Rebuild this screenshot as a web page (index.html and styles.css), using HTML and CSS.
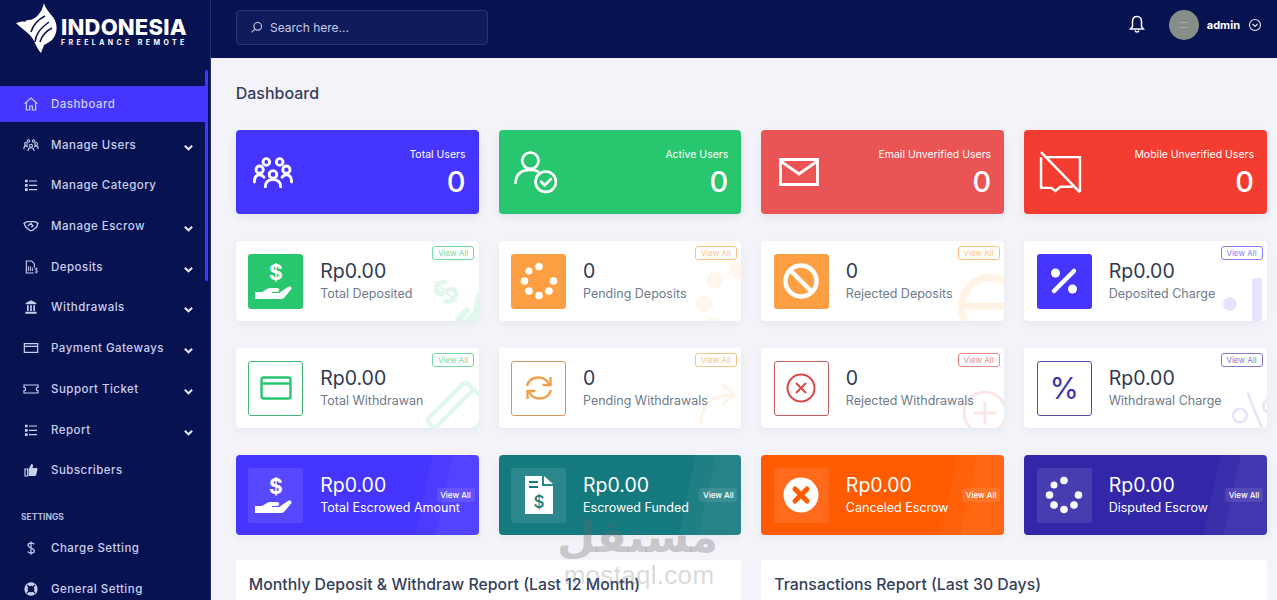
FILE: index.html
```html
<!DOCTYPE html>
<html lang="en">
<head>
  <meta charset="UTF-8" />
  <meta name="viewport" content="width=device-width, initial-scale=1.0"/>
  <title>Dashboard</title>
  <link rel="stylesheet" href="styles.css">
</head>
<body>

  <!-- Icon set -->
  <svg class="defs" xmlns="http://www.w3.org/2000/svg">
    <symbol id="i-home" viewBox="0 0 24 24"><path d="M2.500 11.500 12 3l9.500 8.500M5 9.500V21h5v-6h4v6h5V9.500" fill="none" stroke="currentColor" stroke-width="1.800"/></symbol>
    <symbol id="i-users" viewBox="0 0 44 32"><g fill="none" stroke="currentColor" stroke-width="3" stroke-linecap="round"><circle cx="15" cy="5" r="3.500"/><circle cx="29" cy="5" r="3.500"/><circle cx="8" cy="13" r="3.800"/><circle cx="36" cy="13" r="3.800"/><circle cx="22" cy="18" r="4"/><path d="M2.500 26c0-5 2-7.500 5.500-7.500 2 0 3.500.8 4.500 2.500M41.500 26c0-5-2-7.500-5.500-7.500-2 0-3.500.8-4.500 2.500M14 31c0-5 3-7.500 8-7.500s8 2.500 8 7.500"/></g></symbol>
    <symbol id="i-list" viewBox="0 0 24 24"><path d="M3 4h4v4H3zM3 10.500h4v4H3zM3 17h4v4H3z" fill="currentColor"/><path d="M9 6h12M9 12.500h12M9 19h12" stroke="currentColor" stroke-width="1.800"/></symbol>
    <symbol id="i-shake" viewBox="0 0 24 24"><path d="M1.500 8 6 5.500h12L22.500 8l-2 5.500-7 5.500h-2.500l-7-5.500zM7 12l5-4 3 4-3 1.500" fill="none" stroke="currentColor" stroke-width="1.900"/></symbol>
    <symbol id="i-file" viewBox="0 0 24 24"><path d="M16 21H5V3h8l4 4v6" fill="none" stroke="currentColor" stroke-width="1.700"/><path d="M8 11v7M11 11v7M14 13v5" stroke="currentColor" stroke-width="1.500"/><path d="M22 14.500c-2.500-1-4-.5-4 1s4 1.500 4 3.200-2 1.800-4.200.8M20 13v9" fill="none" stroke="currentColor" stroke-width="1.200"/></symbol>
    <symbol id="i-bank" viewBox="0 0 24 24"><path d="M12 2 20 6v2H4V6zM3.500 19h17v3h-17zM6 9.500h2.500V18H6zM10.800 9.500h2.500V18h-2.500zM15.500 9.500H18V18h-2.500z" fill="currentColor"/></symbol>
    <symbol id="i-card" viewBox="0 0 24 24"><path d="M2 5.500h20v13H2zM2 9.500h20" fill="none" stroke="currentColor" stroke-width="1.800"/></symbol>
    <symbol id="i-ticket" viewBox="0 0 24 24"><path d="M1.500 6h21v3.500a2.500 2.500 0 0 0 0 5V18h-21v-3.500a2.500 2.500 0 0 0 0-5z" fill="none" stroke="currentColor" stroke-width="1.800"/></symbol>
    <symbol id="i-thumb" viewBox="0 0 24 24"><path d="M3 10.500h4V21H3z" fill="none" stroke="currentColor" stroke-width="1.800"/><path d="M8.500 10.500 12.500 3c2 0 3 1.300 2.500 3l-.8 3H20c1.300 0 2 1 1.700 2.300l-1.800 8c-.2 1-1 1.700-2 1.700H8.500z" fill="currentColor"/></symbol>
    <symbol id="i-cog" viewBox="0 0 24 24"><circle cx="12" cy="12" r="7.500" fill="none" stroke="currentColor" stroke-width="5"/><path d="M6 6l3 3M18 6l-3 3M6 18l3-3M18 18l-3-3" stroke="#071251" stroke-width="1.600"/></symbol>
    <symbol id="i-dollar" viewBox="0 0 24 24"><path d="M17 6.500C15.500 4.500 7.500 3.500 7.500 8c0 4.500 9.500 3.500 9.500 8.500 0 4.500-8 3.500-10 1M12 2v20" fill="none" stroke="currentColor" stroke-width="1.800"/></symbol>
    <symbol id="i-chev" viewBox="0 0 12 12"><path d="M2 4 6 8l4-4" fill="none" stroke="currentColor" stroke-width="2.200"/></symbol>
    <symbol id="i-search" viewBox="0 0 16 16"><circle cx="9.500" cy="6.500" r="4.700" fill="none" stroke="currentColor" stroke-width="1.400"/><path d="M6 10l-4 4" stroke="currentColor" stroke-width="1.400"/></symbol>
    <symbol id="i-bell" viewBox="0 0 16 18"><path d="M8 1.500c-3 0-4.500 2.200-4.500 5v5L1.500 14h13l-2-2.500v-5c0-2.800-1.500-5-4.500-5z" fill="none" stroke="currentColor" stroke-width="1.500"/><path d="M6 15.500c.3 1 1 1.500 2 1.500s1.700-.5 2-1.500" fill="none" stroke="currentColor" stroke-width="1.500"/></symbol>
    <symbol id="i-chev-o" viewBox="0 0 14 14"><circle cx="7" cy="7" r="5.500" fill="none" stroke="currentColor" stroke-width="1.100"/><path d="M4.500 6 7 8.500 9.500 6" fill="none" stroke="currentColor" stroke-width="1.200"/></symbol>
    <symbol id="i-user-check" viewBox="0 0 42 42"><g fill="none" stroke="currentColor" stroke-width="2.600" stroke-linecap="round"><circle cx="16" cy="9.500" r="8"/><path d="M1.500 31c.5-8 5-12.500 14.500-12.500 3 0 5.500.5 7.500 1.500"/><circle cx="31" cy="30" r="10"/><path d="M26.500 30l3.500 3.500 6-6"/></g></symbol>
    <symbol id="i-mail" viewBox="0 0 40 28"><path d="M1.500 1.500h37v25h-37zM1.500 3 20 16 38.500 3" fill="none" stroke="currentColor" stroke-width="2.800"/></symbol>
    <symbol id="i-chat-off" viewBox="0 0 42 42"><path d="M6 6h34v34M33 35H21l-5 4-4-3H2V6" fill="none" stroke="currentColor" stroke-width="2.400"/><path d="M2 1l38 39.500" stroke="currentColor" stroke-width="2.400"/></symbol>
    <symbol id="i-hand" viewBox="0 0 41 36"><path d="M0 29h7l5-3c1-.7 2-1 3-1h7c1.400 0 2.300.8 2.300 1.900 0 1.200-.9 2-2.300 2h-5v1.200h7l9-6c1.200-.8 2.600-.6 3.300.4.600 1 .2 1.900-.7 2.600L29 35c-1 .7-1.800 1-3 1H0z" fill="currentColor"/><text class="hand-sign" x="21" y="17" text-anchor="middle" fill="currentColor">$</text></symbol>
    <symbol id="i-dots" viewBox="0 0 44 44" fill="currentColor"><circle cx="22" cy="7.500" r="3.800"/><circle cx="12" cy="12" r="3.500"/><circle cx="7.500" cy="22" r="3.800"/><circle cx="12" cy="32" r="3.800"/><circle cx="22" cy="36.500" r="3.800"/><circle cx="32" cy="32" r="3.800"/><circle cx="36.500" cy="22" r="3.800"/></symbol>
    <symbol id="i-ban" viewBox="0 0 36 36"><circle cx="18" cy="18" r="15.500" fill="none" stroke="currentColor" stroke-width="4.500"/><path d="M7.500 7.500l21 21" stroke="currentColor" stroke-width="4.500"/></symbol>
    <symbol id="i-percent" viewBox="0 0 30 30"><circle cx="6.500" cy="7" r="4.500" fill="currentColor"/><circle cx="23.500" cy="23" r="4.500" fill="currentColor"/><path d="M25 5 5 25" stroke="currentColor" stroke-width="4.500" stroke-linecap="round"/></symbol>
    <symbol id="i-card-big" viewBox="0 0 32 24"><rect x="1.500" y="1.500" width="29" height="21" rx="2" fill="none" stroke="currentColor" stroke-width="2.400"/><path d="M1.500 7.500h29" stroke="currentColor" stroke-width="2.400"/></symbol>
    <symbol id="i-sync" viewBox="0 0 28 28"><g fill="none" stroke="currentColor" stroke-width="2.400"><path d="M2 12C3.500 6.500 8 3.500 13.500 3.500c4.500 0 8 2 10.500 6.500"/><path d="M26 16c-1.500 5.500-6 8.500-11.500 8.500-4.500 0-8-2-10.500-6.500"/><path d="M25.500 3v8h-8M2.500 25v-8h8"/></g></symbol>
    <symbol id="i-x-circle" viewBox="0 0 30 30"><circle cx="15" cy="15" r="13.500" fill="none" stroke="currentColor" stroke-width="2"/><path d="M10 10l10 10M20 10 10 20" stroke="currentColor" stroke-width="2"/></symbol>
    <symbol id="i-x-fill" viewBox="0 0 36 36"><circle cx="18" cy="18" r="17.500" fill="currentColor"/><path d="M12 12l12 12M24 12 12 24" stroke="#ff5b00" stroke-width="5" stroke-linecap="round"/></symbol>
    <symbol id="i-invoice" viewBox="0 0 28 38"><path d="M0 0h17v10h11v28H0z" fill="currentColor"/><path d="M19 0l9 8h-9z" fill="currentColor"/><path d="M4 6h9M4 11h9" stroke="#157a7f" stroke-width="2"/><text class="invoice-sign" x="14" y="32" text-anchor="middle" fill="#157a7f">$</text></symbol>
    <symbol id="i-plus-ring" viewBox="0 0 44 44"><circle cx="22" cy="22" r="20" fill="none" stroke="currentColor" stroke-width="3"/><path d="M22 11v22M11 22h22" stroke="currentColor" stroke-width="3"/></symbol>
    <symbol id="i-minus-ring" viewBox="0 0 44 44"><circle cx="22" cy="22" r="19" fill="none" stroke="currentColor" stroke-width="5"/><path d="M3 22h38" stroke="currentColor" stroke-width="5"/></symbol>
    <symbol id="i-arrow" viewBox="0 0 44 44"><path d="M4 42C4 22 14 12 38 12M26 2l12 10-12 10" fill="none" stroke="currentColor" stroke-width="3"/></symbol>
    <symbol id="i-bars" viewBox="0 0 44 44"><circle cx="11" cy="27" r="7" fill="currentColor"/><rect x="33" y="1" width="10" height="43" rx="2" fill="currentColor"/></symbol>
    <symbol id="i-slash-pct" viewBox="0 0 44 44"><circle cx="8" cy="24" r="6.500" fill="none" stroke="currentColor" stroke-width="2.500"/><circle cx="38" cy="20" r="6.500" fill="none" stroke="currentColor" stroke-width="2.500"/><path d="M19 4l8 38" stroke="currentColor" stroke-width="2.500"/></symbol>
  </svg>

  <div class="layout">

    <!-- Sidebar -->
    <aside class="sidebar">
      <div class="logo">
        <svg class="logo-mark" viewBox="0 0 42 50"><path d="M28 0c1 5 5 9 9 14 5 7 5 16-1 23-2 2-5 3-8 5l-3 8c-3-3-5-8-7-12C15 31 7 27 0 20c4-1 7-2 9-1 1-2 3-2 4-2C19 17 26 10 28 0z" fill="#fff"/><path d="M19 39c1-9 6-14 14-20M24 39c2-7 6-11 12-14M15 29c2-7 6-12 14-16" fill="none" stroke="#071251" stroke-width="1.500"/></svg>
        <div class="logo-text">
          <div class="logo-title">INDONESIA</div>
          <div class="logo-sub">FREELANCE REMOTE</div>
        </div>
      </div>
      <div class="scroll-thumb"></div>
      <ul class="menu">
        <li class="menu-item active"><svg class="menu-icon"><use href="#i-home"/></svg>Dashboard</li>
        <li class="menu-item"><svg class="menu-icon"><use href="#i-users"/></svg>Manage Users<svg class="menu-chev"><use href="#i-chev"/></svg></li>
        <li class="menu-item"><svg class="menu-icon"><use href="#i-list"/></svg>Manage Category</li>
        <li class="menu-item"><svg class="menu-icon"><use href="#i-shake"/></svg>Manage Escrow<svg class="menu-chev"><use href="#i-chev"/></svg></li>
        <li class="menu-item"><svg class="menu-icon"><use href="#i-file"/></svg>Deposits<svg class="menu-chev"><use href="#i-chev"/></svg></li>
        <li class="menu-item"><svg class="menu-icon"><use href="#i-bank"/></svg>Withdrawals<svg class="menu-chev"><use href="#i-chev"/></svg></li>
        <li class="menu-item"><svg class="menu-icon"><use href="#i-card"/></svg>Payment Gateways<svg class="menu-chev"><use href="#i-chev"/></svg></li>
        <li class="menu-item"><svg class="menu-icon"><use href="#i-ticket"/></svg>Support Ticket<svg class="menu-chev"><use href="#i-chev"/></svg></li>
        <li class="menu-item"><svg class="menu-icon"><use href="#i-list"/></svg>Report<svg class="menu-chev"><use href="#i-chev"/></svg></li>
        <li class="menu-item"><svg class="menu-icon"><use href="#i-thumb"/></svg>Subscribers</li>
        <li class="menu-title">SETTINGS</li>
        <li class="menu-item"><svg class="menu-icon"><use href="#i-dollar"/></svg>Charge Setting</li>
        <li class="menu-item"><svg class="menu-icon"><use href="#i-cog"/></svg>General Setting</li>
      </ul>
    </aside>

    <div class="main">

      <!-- Top Navbar -->
      <div class="navbar">
        <div class="search">
          <svg class="search-icon"><use href="#i-search"/></svg>
          <span>Search here...</span>
        </div>
        <div class="user-info">
          <svg class="bell"><use href="#i-bell"/></svg>
          <div class="avatar"><span class="avatar-mark"></span></div>
          <span class="user-name">admin</span>
          <svg class="user-chev"><use href="#i-chev-o"/></svg>
        </div>
      </div>

      <div class="content">
        <h2 class="page-title">Dashboard</h2>

        <div class="cards">

          <!-- Stat cards -->
          <div class="stat bg-blue">
            <svg class="stat-icon icon-users"><use href="#i-users"/></svg>
            <div class="stat-text"><div class="stat-label">Total Users</div><div class="stat-num">0</div></div>
          </div>
          <div class="stat bg-green">
            <svg class="stat-icon icon-check"><use href="#i-user-check"/></svg>
            <div class="stat-text"><div class="stat-label">Active Users</div><div class="stat-num">0</div></div>
          </div>
          <div class="stat bg-rose">
            <svg class="stat-icon icon-mail"><use href="#i-mail"/></svg>
            <div class="stat-text"><div class="stat-label">Email Unverified Users</div><div class="stat-num">0</div></div>
          </div>
          <div class="stat bg-red">
            <svg class="stat-icon icon-check"><use href="#i-chat-off"/></svg>
            <div class="stat-text"><div class="stat-label">Mobile Unverified Users</div><div class="stat-num">0</div></div>
          </div>

          <!-- Solid icon widgets -->
          <div class="widget c-green">
            <div class="widget-icon fill"><svg class="sym-hand"><use href="#i-hand"/></svg></div>
            <div class="widget-text"><div class="widget-value">Rp0.00</div><div class="widget-label">Total Deposited</div></div>
            <a class="view-all">View All</a>
            <svg class="ghost ghost-hand"><use href="#i-hand"/></svg>
          </div>
          <div class="widget c-orange">
            <div class="widget-icon fill"><svg class="sym-dots"><use href="#i-dots"/></svg></div>
            <div class="widget-text"><div class="widget-value">0</div><div class="widget-label">Pending Deposits</div></div>
            <a class="view-all">View All</a>
            <svg class="ghost ghost-dots"><use href="#i-dots"/></svg>
          </div>
          <div class="widget c-orange">
            <div class="widget-icon fill"><svg class="sym-ban"><use href="#i-ban"/></svg></div>
            <div class="widget-text"><div class="widget-value">0</div><div class="widget-label">Rejected Deposits</div></div>
            <a class="view-all">View All</a>
            <svg class="ghost ghost-ring"><use href="#i-minus-ring"/></svg>
          </div>
          <div class="widget c-blue">
            <div class="widget-icon fill"><svg class="sym-percent"><use href="#i-percent"/></svg></div>
            <div class="widget-text"><div class="widget-value">Rp0.00</div><div class="widget-label">Deposited Charge</div></div>
            <a class="view-all">View All</a>
            <svg class="ghost ghost-bars"><use href="#i-bars"/></svg>
          </div>

          <!-- Outline icon widgets -->
          <div class="widget c-green">
            <div class="widget-icon line"><svg class="sym-card"><use href="#i-card-big"/></svg></div>
            <div class="widget-text"><div class="widget-value">Rp0.00</div><div class="widget-label">Total Withdrawan</div></div>
            <a class="view-all">View All</a>
            <svg class="ghost ghost-card"><use href="#i-card-big"/></svg>
          </div>
          <div class="widget c-amber">
            <div class="widget-icon line"><svg class="sym-sync"><use href="#i-sync"/></svg></div>
            <div class="widget-text"><div class="widget-value">0</div><div class="widget-label">Pending Withdrawals</div></div>
            <a class="view-all">View All</a>
            <svg class="ghost ghost-arrow"><use href="#i-arrow"/></svg>
          </div>
          <div class="widget c-rose">
            <div class="widget-icon line"><svg class="sym-x"><use href="#i-x-circle"/></svg></div>
            <div class="widget-text"><div class="widget-value">0</div><div class="widget-label">Rejected Withdrawals</div></div>
            <a class="view-all">View All</a>
            <svg class="ghost ghost-plus"><use href="#i-plus-ring"/></svg>
          </div>
          <div class="widget c-indigo">
            <div class="widget-icon line"><span class="sym-pct">%</span></div>
            <div class="widget-text"><div class="widget-value">Rp0.00</div><div class="widget-label">Withdrawal Charge</div></div>
            <a class="view-all">View All</a>
            <svg class="ghost ghost-pct"><use href="#i-slash-pct"/></svg>
          </div>

          <!-- Coloured widgets -->
          <div class="widget solid bg-blue">
            <div class="widget-icon soft"><svg class="sym-hand"><use href="#i-hand"/></svg></div>
            <div class="widget-text"><div class="widget-value">Rp0.00</div><div class="widget-label">Total Escrowed Amount</div></div>
            <a class="view-all">View All</a>
          </div>
          <div class="widget solid bg-teal">
            <div class="widget-icon soft"><svg class="sym-invoice"><use href="#i-invoice"/></svg></div>
            <div class="widget-text"><div class="widget-value">Rp0.00</div><div class="widget-label">Escrowed Funded</div></div>
            <a class="view-all">View All</a>
          </div>
          <div class="widget solid bg-flame">
            <div class="widget-icon soft"><svg class="sym-ban"><use href="#i-x-fill"/></svg></div>
            <div class="widget-text"><div class="widget-value">Rp0.00</div><div class="widget-label">Canceled Escrow</div></div>
            <a class="view-all">View All</a>
          </div>
          <div class="widget solid bg-indigo">
            <div class="widget-icon soft"><svg class="sym-dots"><use href="#i-dots"/></svg></div>
            <div class="widget-text"><div class="widget-value">Rp0.00</div><div class="widget-label">Disputed Escrow</div></div>
            <a class="view-all">View All</a>
          </div>
        </div>

        <!-- Reports -->
        <div class="reports">
          <div class="report"><h3>Monthly Deposit &amp; Withdraw Report (Last 12 Month)</h3></div>
          <div class="report"><h3>Transactions Report (Last 30 Days)</h3></div>
        </div>
      </div>
    </div>
  </div>

  <div class="watermark">
    <div class="wm-ar" lang="ar" dir="rtl">مستقل</div>
    <div class="wm-en">mostaql.com</div>
  </div>

</body>
</html>
```

FILE: styles.css
```css
* {
  box-sizing: border-box;
}
html, body {
  height: 100%;
}
body {
  margin: 0;
  padding: 0;
  font-family: "Inter", "Open Sans", sans-serif;
  background: #f3f3f9;
  overflow: hidden;
}
.defs {
  display: none;
}
.hand-sign {
  font: 700 21px "Inter", sans-serif;
}
.invoice-sign {
  font: 500 17px "Inter", sans-serif;
}
.layout {
  display: flex;
  height: 600px;
  overflow: hidden;
}

/* sidebar */
.sidebar {
  position: relative;
  width: 211px;
  flex-shrink: 0;
  background: #071251;
  border-right: 1px solid #26306a;
  color: #c9cfee;
}
.logo {
  height: 86px;
  padding: 3px 0 0 16px;
  display: flex;
  align-items: flex-start;
}
.logo-mark {
  width: 42px;
  height: 50px;
  flex-shrink: 0;
}
.logo-text {
  margin: 13px 0 0 3px;
  color: #fff;
}
.logo-title {
  font-size: 22px;
  line-height: 22px;
  font-weight: 800;
  letter-spacing: 0.200px;
}
.logo-sub {
  font-size: 7px;
  line-height: 9px;
  font-weight: 700;
  letter-spacing: 3.400px;
  white-space: nowrap;
}
.scroll-thumb {
  position: absolute;
  top: 70px;
  left: 205px;
  width: 3px;
  height: 211px;
  border-radius: 2px;
  background: #4634ff;
}
.menu {
  list-style: none;
  margin: 0;
  padding: 0;
}
.menu-item {
  display: flex;
  align-items: center;
  height: 36px;
  margin: 0 5px 4.700px 0;
  padding-left: 23px;
  font-size: 11.500px;
  font-weight: 500;
  letter-spacing: 0.480px;
  white-space: nowrap;
}
.menu-item.active {
  background: #4634ff;
}
.menu-icon {
  width: 16px;
  height: 16px;
  margin-right: 12px;
  flex-shrink: 0;
}
.menu-chev {
  width: 11px;
  height: 11px;
  margin: 5px 11px 0 auto;
  color: #e6e8f5;
}
.menu-title {
  height: 37px;
  padding: 19px 0 0 21px;
  font-size: 8.500px;
  line-height: 11px;
  font-weight: 700;
  color: #b3bbdf;
}

/* navbar */
.main {
  flex: 1;
  min-width: 0;
}
.navbar {
  height: 58px;
  background: #071251;
  padding: 0 15px 0 25px;
  display: flex;
  justify-content: space-between;
  align-items: flex-start;
}
.search {
  width: 252px;
  height: 35px;
  margin-top: 10px;
  padding-left: 13px;
  display: flex;
  align-items: center;
  gap: 7px;
  background: #101b5c;
  border: 1px solid #2a3573;
  border-radius: 4px;
  color: #c8cce2;
  font-size: 12px;
}
.search-icon {
  width: 13px;
  height: 13px;
}
.user-info {
  display: flex;
  align-items: center;
  height: 50px;
  color: #fff;
}
.bell {
  width: 16px;
  height: 18px;
  margin: -3px 24px 0 0;
}
.avatar {
  width: 30px;
  height: 30px;
  border-radius: 50%;
  background: #868e89;
  display: flex;
  align-items: center;
  justify-content: center;
}
.avatar-mark {
  width: 9px;
  height: 6px;
  border-top: 1px solid #a6ada8;
  border-bottom: 1px solid #a6ada8;
}
.user-name {
  margin: 0 8px;
  font-size: 11px;
  font-weight: 700;
}
.user-chev {
  width: 14px;
  height: 14px;
  color: #dfe2f2;
}

/* content */
.content {
  padding: 24px 10px 0 24.700px;
}
.page-title {
  margin: 0 0 26px;
  font-size: 16px;
  line-height: 22px;
  font-weight: 500;
  color: #34405a;
}
.cards {
  display: grid;
  grid-template-columns: repeat(4, 1fr);
  gap: 27px 20px;
}
.stat {
  height: 84px;
  padding: 0 13px 0 15px;
  display: flex;
  justify-content: space-between;
  align-items: center;
  color: #fff;
  border-radius: 4px;
  box-shadow: 0 3px 8px rgba(40,40,90,0.08);
}
.stat-text {
  text-align: right;
  margin-top: 2px;
}
.stat-label {
  font-size: 10.500px;
  line-height: 16px;
  margin-bottom: 2.500px;
}
.stat-num {
  font-size: 29px;
  line-height: 34px;
  font-weight: 500;
}
.stat-icon {
  flex-shrink: 0;
}
.icon-users {
  width: 42px;
  height: 31px;
  margin-left: 1px;
}
.icon-check {
  width: 43px;
  height: 43px;
}
.icon-mail {
  width: 40px;
  height: 28px;
  margin-left: 3px;
}

/* widgets */
.widget {
  position: relative;
  height: 80px;
  padding: 0 12.500px;
  display: flex;
  align-items: center;
  gap: 17px;
  background: #fff;
  border-radius: 4px;
  overflow: hidden;
  box-shadow: 0 3px 10px rgba(40,40,90,0.05);
  white-space: nowrap;
}
.bg-blue { background: #4634ff; }
.bg-green { background: #28c76f; }
.bg-rose { background: #ea5455; }
.bg-red { background: #f53c30; }
.bg-teal { background: #157a7f; }
.bg-flame { background: #ff5b00; }
.bg-indigo { background: #3227a8; }
.c-green { --tone: #28c76f; }
.c-orange { --tone: #ff9f43; }
.c-amber { --tone: #f0a04b; }
.c-rose { --tone: #d9484a; }
.c-blue { --tone: #4634ff; }
.c-indigo { --tone: #3f35b4; }
.widget-icon {
  width: 55px;
  height: 55px;
  flex-shrink: 0;
  border-radius: 3px;
  display: flex;
  align-items: center;
  justify-content: center;
}
.widget-icon.fill {
  background: var(--tone);
  color: #fff;
}
.widget-icon.line {
  border: 1px solid color-mix(in srgb, var(--tone) 70%, #8a8a8a);
  color: var(--tone);
}
.widget-icon.soft {
  background: rgba(255,255,255,0.1);
  color: #fff;
}
.widget-text {
  margin-top: -2px;
}
.widget-value {
  font-size: 19.500px;
  line-height: 26px;
  font-weight: 400;
  color: #2f3a4f;
}
.widget-label {
  margin-top: 1px;
  font-size: 12.500px;
  line-height: 18px;
  color: #6f7a8a;
}
.view-all {
  position: absolute;
  top: 5px;
  right: 4.500px;
  width: 42px;
  height: 14px;
  border: 1px solid var(--tone);
  border-radius: 3px;
  font-size: 8px;
  line-height: 12px;
  text-align: center;
  color: var(--tone);
  opacity: 0.65;
}
.sym-hand { width: 41px; height: 36px; }
.sym-dots { width: 44px; height: 44px; }
.sym-ban { width: 36px; height: 36px; }
.sym-percent { width: 30px; height: 30px; }
.sym-card { width: 32px; height: 24px; }
.sym-sync { width: 28px; height: 28px; }
.sym-x { width: 30px; height: 30px; }
.sym-invoice { width: 28px; height: 38px; }
.sym-pct {
  font-size: 30px;
  line-height: 1;
}

/* faded corner icons */
.ghost {
  position: absolute;
  color: var(--tone);
  opacity: 0.13;
}
.ghost-hand {
  width: 66px;
  height: 58px;
  right: -9px;
  bottom: -10px;
  transform: rotate(-45deg);
}
.ghost-dots {
  width: 100px;
  height: 100px;
  right: -46px;
  bottom: -32px;
  opacity: 0.09;
}
.ghost-ring {
  width: 66px;
  height: 66px;
  right: -19px;
  bottom: -18px;
}
.ghost-bars {
  width: 44px;
  height: 44px;
  right: 4px;
  bottom: 0;
}
.ghost-card {
  width: 62px;
  height: 46px;
  right: -12px;
  bottom: -10px;
  transform: rotate(-45deg);
}
.ghost-arrow {
  width: 43px;
  height: 43px;
  right: 1px;
  bottom: 2px;
}
.ghost-plus {
  width: 46px;
  height: 46px;
  right: -4px;
  bottom: -8px;
}
.ghost-pct {
  width: 50px;
  height: 46px;
  right: -12px;
  bottom: -6px;
  transform: rotate(-10deg);
}

/* coloured widgets */
.widget.solid {
  color: #fff;
}
.widget.solid::before,
.widget.solid::after {
  content: "";
  position: absolute;
  top: 0;
  bottom: 0;
  background: rgba(255,255,255,0.04);
  transform: skewX(-12deg);
}
.widget.solid::before {
  left: 188px;
  right: -20px;
}
.widget.solid::after {
  left: 208px;
  right: -20px;
}
.solid .widget-text {
  position: relative;
  z-index: 1;
}
.solid .widget-value,
.solid .widget-label {
  color: #fff;
}
.solid .view-all {
  top: 33px;
  right: 4px;
  width: 38px;
  height: 14px;
  border: none;
  background: rgba(255,255,255,0.1);
  color: #fff;
  font-weight: 500;
  line-height: 14px;
  opacity: 1;
  z-index: 1;
}

/* reports */
.reports {
  display: grid;
  grid-template-columns: repeat(2, 1fr);
  gap: 20px;
  margin-top: 25px;
}
.report {
  height: 200px;
  padding: 15px 13px;
  background: #fff;
  border-radius: 4px;
}
.report h3 {
  margin: 0;
  font-size: 15.850px;
  line-height: 20px;
  font-weight: 500;
  color: #34405a;
  white-space: nowrap;
}

/* watermark */
.watermark {
  position: absolute;
  left: 560px;
  top: 512px;
  width: 158px;
  text-align: center;
  color: rgba(105,105,105,0.33);
  pointer-events: none;
}
.wm-ar {
  font-family: "DejaVu Sans", sans-serif;
  font-size: 44px;
  line-height: 50px;
  font-weight: 700;
}
.wm-en {
  font-family: "Liberation Sans", sans-serif;
  font-size: 26px;
  line-height: 26px;
  letter-spacing: 0.300px;
  color: rgba(120,120,120,0.28);
}
```
